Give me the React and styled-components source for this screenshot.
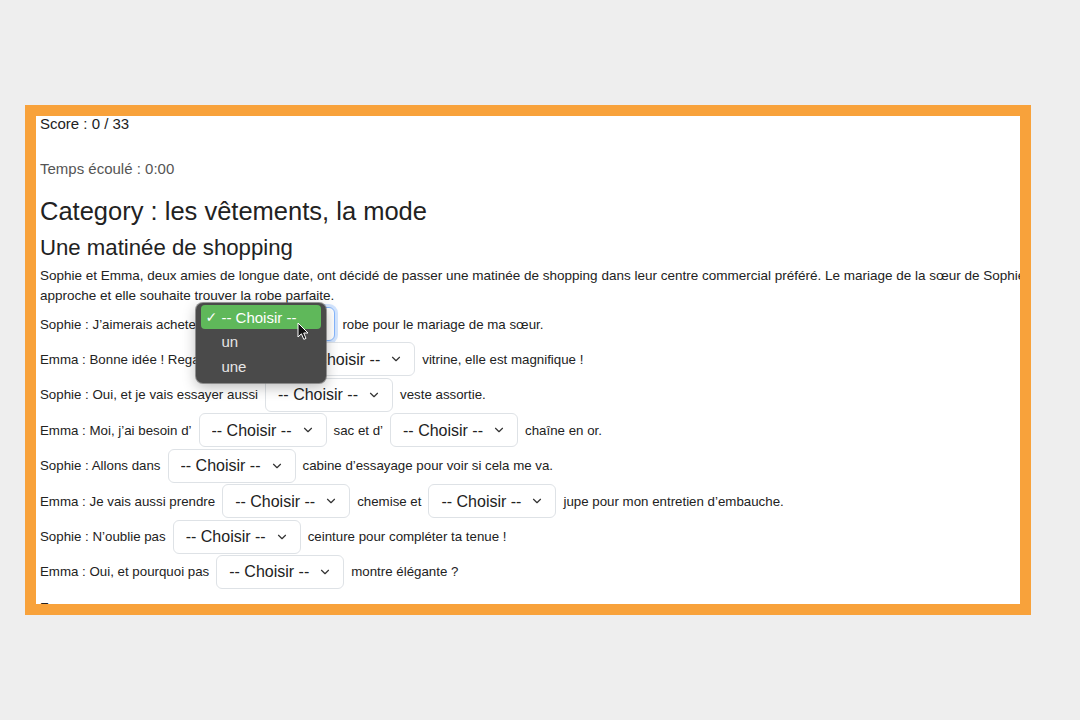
import styled, { createGlobalStyle } from "styled-components";
import { ChevronDown } from "lucide-react";

const GlobalStyle = createGlobalStyle`
  html, body {
    margin: 0;
    background: #eeeeee;
  }
  body {
    font-family: "Liberation Sans", Arial, sans-serif;
    color: #222222;
  }
`;

const Page = styled.div`
  height: 720px;
  box-sizing: border-box;
  padding: 105px 0 0 25px;
`;

const Frame = styled.div`
  width: 1006px;
  height: 510px;
  box-sizing: border-box;
  border: 11px solid #f8a23b;
  background: #ffffff;
  overflow: hidden;
`;

const Content = styled.div`
  padding: 0 4px;
`;

const Score = styled.div`
  margin-top: -1px;
  font-size: 15px;
  line-height: 18px;
`;

const Timer = styled.p`
  margin: 27px 0 0;
  font-size: 15px;
  line-height: 18px;
  color: #555555;
`;

const Category = styled.h2`
  margin: 18px 0 0;
  font-size: 25.5px;
  line-height: 30px;
  font-weight: 400;
`;

const Title = styled.h3`
  margin: 8.5px 0 0;
  font-size: 22.2px;
  line-height: 26px;
  font-weight: 400;
`;

const Intro = styled.p`
  margin: 5.5px 0 0;
  font-size: 13.5px;
  line-height: 20px;
  white-space: nowrap;
`;

const Dialogue = styled.div`
  margin-top: 1px;
  display: flex;
  flex-direction: column;
  gap: 1.43px;
`;

const Line = styled.div`
  display: flex;
  align-items: center;
  gap: 7px;
  min-height: 34px;
  font-size: 13.3px;
  white-space: nowrap;
`;

const Field = styled.span`
  position: relative;
  display: inline-grid;

  & > * {
    grid-area: 1 / 1;
  }
`;

const Select = styled.select`
  appearance: none;
  width: 128px;
  height: 34px;
  box-sizing: border-box;
  padding: 0 0 0 12px;
  border: 1px solid ${(p) => (p.$focused ? "#86b7fe" : "#dee2e6")};
  border-radius: 6px;
  background: #ffffff;
  font-family: inherit;
  font-size: 16px;
  color: #222222;
  box-shadow: ${(p) => (p.$focused ? "0 0 0 3px rgba(13, 110, 253, 0.18)" : "none")};
  outline: none;
`;

const Chevron = styled(ChevronDown)`
  justify-self: end;
  align-self: center;
  margin-right: 12px;
  pointer-events: none;
  color: #333333;
`;

const Menu = styled.div`
  position: absolute;
  left: -11px;
  top: -4px;
  z-index: 5;
  width: 130px;
  height: 80px;
  box-sizing: border-box;
  padding: 2px 5px 3px;
  border-radius: 7px;
  background: #4a4a4a;
  box-shadow: 0 0 0 1px rgba(110, 110, 110, 0.7), 0 4px 14px rgba(0, 0, 0, 0.28);
`;

const Option = styled.div`
  display: grid;
  grid-template-columns: 20px auto;
  align-items: center;
  height: 24px;
  margin-bottom: 0.5px;
  border-radius: 4px;
  font-size: 15px;
  color: ${(p) => (p.$active ? "#ffffff" : "#e6e6e6")};
  background: ${(p) => (p.$active ? "#5fb85a" : "transparent")};
`;

const Check = styled.span`
  padding-left: 4px;
  font-family: "DejaVu Sans", sans-serif;
  font-size: 14px;
`;

const Pointer = styled.svg`
  position: absolute;
  left: 101px;
  top: 19px;
`;

function Choice({ open, focused }) {
  return (
    <Field>
      <Select $focused={focused} defaultValue="">
        <option value="">-- Choisir --</option>
        <option value="un">un</option>
        <option value="une">une</option>
      </Select>
      <Chevron size={14} strokeWidth={2} />
      {open && (
        <Menu>
          <Option $active>
            <Check>✓</Check>
            <span>-- Choisir --</span>
          </Option>
          <Option>
            <span />
            <span>un</span>
          </Option>
          <Option>
            <span />
            <span>une</span>
          </Option>
          <Pointer width="12" height="19" viewBox="0 0 12 19">
            <path
              d="M1 1 L1 15 L4.4 11.8 L6.8 17.4 L9 16.4 L6.7 11 L11 11 Z"
              fill="#111111"
              stroke="#ffffff"
              strokeWidth="1"
              strokeLinejoin="round"
            />
          </Pointer>
        </Menu>
      )}
    </Field>
  );
}

export default function App() {
  return (
    <>
      <GlobalStyle />
      <Page>
        <Frame>
          <Content>
            <Score>Score : 0 / 33</Score>
            <Timer>Temps écoulé : 0:00</Timer>
            <Category>Category : les vêtements, la mode</Category>
            <Title>Une matinée de shopping</Title>
            <Intro>
              Sophie et Emma, deux amies de longue date, ont décidé de passer une matinée de shopping dans leur centre
              commercial préféré. Le mariage de la sœur de Sophie
              <br />
              approche et elle souhaite trouver la robe parfaite.
            </Intro>
            <Dialogue>
              <Line>
                <span>Sophie : J’aimerais acheter</span>
                <Choice open focused />
                <span>robe pour le mariage de ma sœur.</span>
              </Line>
              <Line>
                <span>Emma : Bonne idée ! Regarde bien dans</span>
                <Choice />
                <span>vitrine, elle est magnifique !</span>
              </Line>
              <Line>
                <span>Sophie : Oui, et je vais essayer aussi</span>
                <Choice />
                <span>veste assortie.</span>
              </Line>
              <Line>
                <span>Emma : Moi, j’ai besoin d’</span>
                <Choice />
                <span>sac et d’</span>
                <Choice />
                <span>chaîne en or.</span>
              </Line>
              <Line>
                <span>Sophie : Allons dans</span>
                <Choice />
                <span>cabine d’essayage pour voir si cela me va.</span>
              </Line>
              <Line>
                <span>Emma : Je vais aussi prendre</span>
                <Choice />
                <span>chemise et</span>
                <Choice />
                <span>jupe pour mon entretien d’embauche.</span>
              </Line>
              <Line>
                <span>Sophie : N’oublie pas</span>
                <Choice />
                <span>ceinture pour compléter ta tenue !</span>
              </Line>
              <Line>
                <span>Emma : Oui, et pourquoi pas</span>
                <Choice />
                <span>montre élégante ?</span>
              </Line>
              <Line>
                <span>Emma : …</span>
              </Line>
            </Dialogue>
          </Content>
        </Frame>
      </Page>
    </>
  );
}
